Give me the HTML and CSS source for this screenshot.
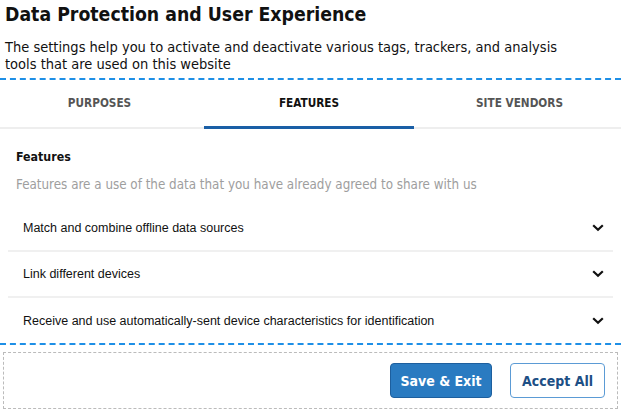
FILE: index.html
```html
<!DOCTYPE html>
<html lang="en">
<head>
<meta charset="utf-8">
<title>Data Protection and User Experience</title>
<link rel="stylesheet" href="styles.css">
</head>
<body>
<div class="modal">
  <header class="head">
    <h1 class="title">Data Protection and User Experience</h1>
    <p class="lead">The settings help you to activate and deactivate various tags, trackers, and analysis tools that are used on this website</p>
  </header>
  <nav class="tabs">
    <div class="tab first">PURPOSES</div>
    <div class="tab active">FEATURES</div>
    <div class="tab last">SITE VENDORS</div>
  </nav>
  <section class="content">
    <h2 class="sec-title">Features</h2>
    <p class="sec-desc">Features are a use of the data that you have already agreed to share with us</p>
    <ul class="list">
      <li class="row"><span>Match and combine offline data sources</span><svg class="chev" viewBox="0 0 12 8" width="12" height="8"><path d="M1.2 1.2 6 5.8 10.8 1.2" fill="none" stroke="#111" stroke-width="2.2"/></svg></li>
      <li class="row"><span>Link different devices</span><svg class="chev" viewBox="0 0 12 8" width="12" height="8"><path d="M1.2 1.2 6 5.8 10.8 1.2" fill="none" stroke="#111" stroke-width="2.2"/></svg></li>
      <li class="row"><span>Receive and use automatically-sent device characteristics for identification</span><svg class="chev" viewBox="0 0 12 8" width="12" height="8"><path d="M1.2 1.2 6 5.8 10.8 1.2" fill="none" stroke="#111" stroke-width="2.2"/></svg></li>
    </ul>
  </section>
  <footer class="foot">
    <div class="actions">
      <button class="btn primary">Save &amp; Exit</button>
      <button class="btn outline">Accept All</button>
    </div>
  </footer>
</div>
</body>
</html>
```
FILE: styles.css
```css
html, body {
  margin: 0;
  padding: 0;
  background: #fff;
}
body {
  font-family: "DejaVu Sans Condensed", "DejaVu Sans", sans-serif;
  color: #111;
  width: 621px;
  overflow: hidden;
}
.modal {
  display: flex;
  flex-direction: column;
}
.head {
  padding: 2px 5px 0 5px;
  border-bottom: 2px dashed #1e8fe6;
  height: 80px;
  box-sizing: border-box;
}
.title {
  margin: 0;
  font-size: 19.3px;
  font-weight: bold;
  line-height: 26px;
  color: #111;
}
.lead {
  margin: 11px 0 0 0;
  max-width: 570px;
  font-size: 14.5px;
  line-height: 17px;
  color: #111;
}
.tabs {
  display: grid;
  grid-template-columns: 204px 210px 1fr;
  border-bottom: 2px solid #eeeeee;
}
.tab {
  text-align: center;
  font-size: 11.7px;
  font-weight: bold;
  color: #555;
  height: 47px;
  line-height: 46px;
  box-sizing: border-box;
}
.tab.first {
  padding-right: 5px;
}
.tab.last {
  padding-left: 4px;
}
.tab.active {
  color: #111;
  border-bottom: 3px solid #1a5fa6;
  margin-bottom: -2px;
  height: 49px;
}
.content {
  padding: 0 8px;
}
.sec-title {
  margin: 0;
  padding: 20px 0 0 8px;
  font-size: 12.3px;
  line-height: 16px;
  font-weight: bold;
  color: #111;
}
.sec-desc {
  margin: 11px 0 0 8px;
  font-size: 13.3px;
  line-height: 18px;
  color: #9e9e9e;
}
.list {
  list-style: none;
  margin: 12px 0 0 0;
  padding: 0;
}
.row {
  display: flex;
  align-items: center;
  justify-content: space-between;
  height: 46px;
  padding: 0 9px 0 15px;
  box-sizing: border-box;
  border-bottom: 2px solid #f0f0f0;
  font-family: "Liberation Sans", Arial, sans-serif;
  font-size: 12.5px;
  color: #111;
}
.row:last-child {
  border-bottom: none;
  height: 45px;
}
.chev {
  display: block;
  flex: none;
}
.foot {
  border-top: 2px dashed #1e8fe6;
  padding: 7px 3px 4px 3px;
}
.actions {
  border: 1px dashed #bbb;
  height: 55px;
  display: flex;
  justify-content: flex-end;
  align-items: center;
  gap: 18px;
  padding-right: 12px;
}
.btn {
  font-family: "DejaVu Sans Condensed", "DejaVu Sans", sans-serif;
  font-size: 14px;
  font-weight: bold;
  height: 35px;
  border-radius: 4px;
  padding: 0;
  white-space: nowrap;
  cursor: pointer;
}
.btn.primary {
  background: #2a7bc1;
  border: 1px solid #1d5f9e;
  color: #fff;
  width: 102px;
}
.btn.outline {
  background: #fff;
  border: 1px solid #5b9bd5;
  color: #1d4f85;
  width: 95px;
}
```
